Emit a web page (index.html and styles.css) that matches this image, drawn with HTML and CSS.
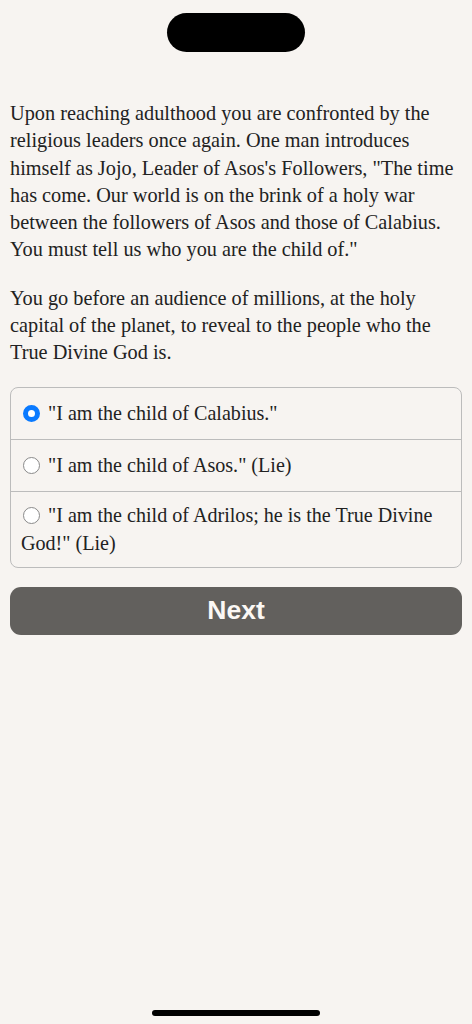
FILE: index.html
```html
<!DOCTYPE html>
<html>
<head>
<meta charset="utf-8">
<link rel="stylesheet" href="styles.css">
</head>
<body>
<div class="screen">
  <div class="island"></div>
  <main class="content">
    <p class="story">Upon reaching adulthood you are confronted by the religious leaders once again. One man introduces himself as Jojo, Leader of Asos's Followers, "The time has come. Our world is on the brink of a holy war between the followers of Asos and those of Calabius. You must tell us who you are the child of."</p>
    <p class="story">You go before an audience of millions, at the holy capital of the planet, to reveal to the people who the True Divine God is.</p>
    <div class="choices">
      <div class="choice"><span class="radio radio-on"></span>"I am the child of Calabius."</div>
      <div class="choice"><span class="radio"></span>"I am the child of Asos." (Lie)</div>
      <div class="choice"><span class="radio"></span>"I am the child of Adrilos; he is the True Divine God!" (Lie)</div>
    </div>
    <button class="next">Next</button>
  </main>
  <div class="home-bar"></div>
</div>
</body>
</html>
```
FILE: styles.css
```css
html, body {
  margin: 0;
  padding: 0;
  background: #f7f4f1;
}
.screen {
  width: 472px;
  height: 1024px;
  display: flex;
  flex-direction: column;
  align-items: center;
  box-sizing: border-box;
  padding-top: 13px;
}
.island {
  width: 138px;
  height: 39px;
  border-radius: 20px;
  background: #000;
  flex: none;
}
.content {
  width: 100%;
  box-sizing: border-box;
  padding: 0 10px;
  margin-top: 48px;
  flex: 1;
  font-family: "Liberation Serif", "DejaVu Serif", serif;
  font-size: 20.3px;
  line-height: 27.3px;
  color: #222;
}
.story {
  margin: 0 0 21px 0;
}
.choices {
  border: 1px solid #bcbcbc;
  border-radius: 8px;
  margin-top: -1px;
  font-size: 20.1px;
}
.choice {
  padding: 12px 10px 12px 10px;
}
.choice + .choice {
  border-top: 1px solid #bcbcbc;
}
.choice:last-child {
  padding-top: 10px;
  padding-bottom: 10px;
}
.radio {
  display: inline-block;
  box-sizing: border-box;
  width: 17px;
  height: 17px;
  border-radius: 50%;
  border: 1.5px solid #8a8a8a;
  background: #fff;
  margin: 0 8px 0 2px;
  vertical-align: -2px;
}
.radio-on {
  border: 5px solid #0a7aff;
  background: #fff;
}
.next {
  display: block;
  width: 100%;
  height: 48px;
  margin-top: 19px;
  border: none;
  border-radius: 11px;
  background: #62605d;
  color: #fbf8f5;
  font-family: "Liberation Sans", Arial, sans-serif;
  font-weight: bold;
  font-size: 26.5px;
}
.home-bar {
  width: 168px;
  height: 6px;
  border-radius: 3px;
  background: #000;
  margin-bottom: 8px;
  flex: none;
}
```
